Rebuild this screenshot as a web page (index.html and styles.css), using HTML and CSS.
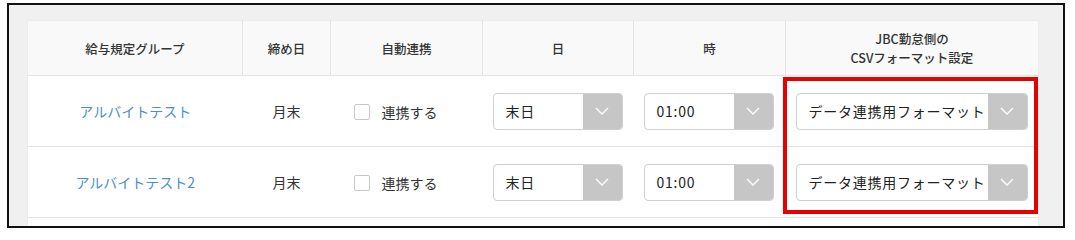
FILE: index.html
```html
<!DOCTYPE html>
<html lang="ja">
<head>
<meta charset="utf-8">
<link rel="stylesheet" href="styles.css">
</head>
<body>
<div class="frame">
  <div class="panel">
    <div class="table-wrap">
      <table class="grid">
        <colgroup>
          <col class="c1"><col class="c2"><col class="c3"><col class="c4"><col class="c5"><col class="c6">
        </colgroup>
        <thead>
          <tr>
            <th>給与規定グループ</th>
            <th>締め日</th>
            <th>自動連携</th>
            <th>日</th>
            <th>時</th>
            <th>JBC勤怠側の<br>CSVフォーマット設定</th>
          </tr>
        </thead>
        <tbody>
          <tr>
            <td class="center"><a class="link" href="#">アルバイトテスト</a></td>
            <td class="center">月末</td>
            <td class="chk"><span class="box"></span><span>連携する</span></td>
            <td class="sel"><div class="select s-day"><span class="val">末日</span><span class="arrow"><svg width="14" height="8" viewBox="0 0 14 8"><path d="M1 1 L7 7 L13 1" fill="none" stroke="#fff" stroke-width="1.4"/></svg></span></div></td>
            <td class="sel"><div class="select s-time"><span class="val">01:00</span><span class="arrow"><svg width="14" height="8" viewBox="0 0 14 8"><path d="M1 1 L7 7 L13 1" fill="none" stroke="#fff" stroke-width="1.4"/></svg></span></div></td>
            <td class="sel"><div class="select s-fmt"><span class="val">データ連携用フォーマット</span><span class="arrow"><svg width="14" height="8" viewBox="0 0 14 8"><path d="M1 1 L7 7 L13 1" fill="none" stroke="#fff" stroke-width="1.4"/></svg></span></div></td>
          </tr>
          <tr>
            <td class="center"><a class="link" href="#">アルバイトテスト2</a></td>
            <td class="center">月末</td>
            <td class="chk"><span class="box"></span><span>連携する</span></td>
            <td class="sel"><div class="select s-day"><span class="val">末日</span><span class="arrow"><svg width="14" height="8" viewBox="0 0 14 8"><path d="M1 1 L7 7 L13 1" fill="none" stroke="#fff" stroke-width="1.4"/></svg></span></div></td>
            <td class="sel"><div class="select s-time"><span class="val">01:00</span><span class="arrow"><svg width="14" height="8" viewBox="0 0 14 8"><path d="M1 1 L7 7 L13 1" fill="none" stroke="#fff" stroke-width="1.4"/></svg></span></div></td>
            <td class="sel"><div class="select s-fmt"><span class="val">データ連携用フォーマット</span><span class="arrow"><svg width="14" height="8" viewBox="0 0 14 8"><path d="M1 1 L7 7 L13 1" fill="none" stroke="#fff" stroke-width="1.4"/></svg></span></div></td>
          </tr>
          <tr class="rest"><td></td><td></td><td></td><td></td><td></td><td></td></tr>
        </tbody>
      </table>
      <div class="highlight"></div>
    </div>
  </div>
</div>
</body>
</html>
```

FILE: styles.css
```css
html, body {
  margin: 0;
  padding: 0;
  background: #fff;
}
body {
  font-family: "Noto Sans CJK JP", "Noto Sans", sans-serif;
  color: #333;
}
.frame {
  position: absolute;
  left: 7px;
  top: 3px;
  width: 1054px;
  height: 221px;
  border: 2px solid #111;
  overflow: hidden;
  background: #f0f0f0;
}
.panel {
  padding: 15px 0 0 18px;
}
.table-wrap {
  position: relative;
  width: 1011px;
}
.grid {
  width: 1011px;
  table-layout: fixed;
  border-collapse: collapse;
  background: #fff;
}
.c1 { width: 215px; }
.c2 { width: 88px; }
.c3 { width: 152px; }
.c4 { width: 151px; }
.c5 { width: 152px; }
.c6 { width: 253px; }
.grid th {
  height: 54px;
  padding: 0;
  background: #f9f9f9;
  font-size: 12.5px;
  font-weight: 500;
  line-height: 19px;
  color: #333;
  text-align: center;
  border-right: 1px solid #e4e4e4;
  border-bottom: 1px solid #e2e2e2;
  border-top: 1px solid #ececec;
}
.grid th:first-child { border-left: 1px solid #ececec; }
.grid th:last-child { border-right: 1px solid #ececec; }
.grid td {
  height: 70px;
  padding: 0;
  font-size: 14px;
  border-bottom: 1px solid #e4e4e4;
  vertical-align: middle;
}
.grid td:first-child { border-left: 1px solid #ececec; }
.grid td:last-child { border-right: 1px solid #ececec; }
.grid .rest td { height: 20px; border-bottom: none; }
.center { text-align: center; }
.link {
  color: #4a8fcf;
  text-decoration: none;
}
.chk {
  padding-left: 23px !important;
}
.chk span { vertical-align: middle; }
.box {
  display: inline-block;
  width: 14px;
  height: 14px;
  border: 1px solid #c9c9c9;
  border-radius: 2px;
  background: #fff;
  margin-right: 12px;
}
.sel { padding-left: 10px !important; }
.select {
  display: flex;
  height: 35px;
  border: 1px solid #cfcfcf;
  border-radius: 4px;
  background: #fff;
  overflow: hidden;
}
.s-day, .s-time { width: 128px; }
.s-fmt { width: 230px; }
.val {
  flex: 1;
  display: flex;
  align-items: center;
  padding-left: 12px;
  font-size: 14px;
  letter-spacing: 0.75px;
  white-space: nowrap;
  overflow: hidden;
  color: #222;
}
.arrow {
  width: 39px;
  flex: none;
  background: #c6c6c6;
  display: flex;
  align-items: center;
  justify-content: center;
}
.highlight {
  position: absolute;
  left: 756px;
  top: 57px;
  width: 247px;
  height: 129px;
  border: 4px solid #e60000;
  pointer-events: none;
}
```
